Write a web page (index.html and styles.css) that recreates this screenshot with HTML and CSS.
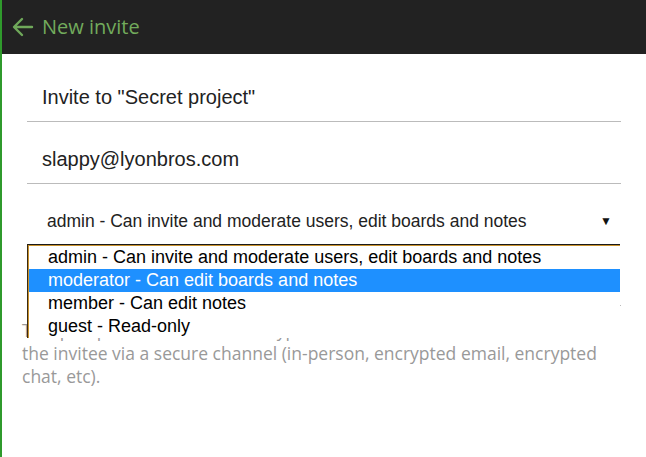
FILE: index.html
```html
<!DOCTYPE html>
<html>
<head>
<meta charset="utf-8">
<link rel="stylesheet" href="styles.css">
</head>
<body>
<div class="app">
  <header class="topbar">
    <svg class="back" width="22" height="20" viewBox="0 0 22 20"><path d="M20 10H3M10 2L2 10l8 8" fill="none" stroke="#6fa85a" stroke-width="2.4" stroke-linecap="round" stroke-linejoin="round"/></svg>
    <h1 class="title">New invite</h1>
  </header>
  <main class="content">
    <div class="field"><span class="field-text">Invite to "Secret project"</span></div>
    <div class="field"><span class="field-text">slappy@lyonbros.com</span></div>
    <div class="select-wrap">
      <div class="select">
        <span class="select-text">admin - Can invite and moderate users, edit boards and notes</span>
        <span class="caret">&#9660;</span>
      </div>
      <ul class="options">
        <li class="option">admin - Can invite and moderate users, edit boards and notes</li>
        <li class="option selected">moderator - Can edit boards and notes</li>
        <li class="option">member - Can edit notes</li>
        <li class="option">guest - Read-only</li>
      </ul>
    </div>
    <div class="field pass"><span class="field-text">&nbsp;</span></div>
    <p class="desc">This passphrase is used to encrypt the invite. You can communicate it to the invitee via a secure channel (in-person, encrypted email, encrypted chat, etc).</p>
  </main>
</div>
</body>
</html>
```

FILE: styles.css
```css
html, body {
  margin: 0;
  padding: 0;
  height: 100%;
  background: #fff;
}
.app {
  min-height: 100%;
  border-left: 2px solid #2f9a2c;
  box-sizing: border-box;
}
.topbar {
  height: 54px;
  background: #222222;
  display: flex;
  align-items: center;
  padding-left: 10px;
}
.back {
  display: block;
  margin-right: 8px;
}
.title {
  margin: 0;
  font-family: "Open Sans", sans-serif;
  font-weight: normal;
  font-size: 20px;
  color: #72ab5c;
  line-height: 26px;
}
.content {
  padding: 6px 25px 0 25px;
}
.field {
  border-bottom: 1px solid #bbbbbb;
  padding: 24px 0 11px 15px;
  height: 26px;
}
.field-text {
  font-family: "Liberation Sans", Arial, sans-serif;
  font-size: 20px;
  line-height: 26px;
  color: #222;
}
.select-wrap {
  position: relative;
}
.select {
  display: flex;
  align-items: center;
  justify-content: space-between;
  height: 60px;
  padding: 0 9px 0 20px;
  font-family: "Liberation Sans", Arial, sans-serif;
  font-size: 17.5px;
  color: #222;
}
.select-text {
  padding-top: 14px;
}
.caret {
  font-size: 12px;
  padding-top: 14px;
  color: #111;
}
.options {
  position: absolute;
  top: 60px;
  left: 0;
  right: 1px;
  margin: 0;
  padding: 1px 0 0 1px;
  list-style: none;
  background: #fff;
  border-top: 1px solid #1a1a1a;
  border-left: 1px solid #3a2a10;
  box-shadow: inset 1px 1px 0 #c8922e;
  z-index: 2;
  font-family: "Liberation Sans", Arial, sans-serif;
  font-size: 18px;
  color: #000;
}
.option {
  height: 23px;
  line-height: 22px;
  padding-left: 19px;
}
.option.selected {
  background: #1e90ff;
  color: #fff;
}
.pass {
  height: 26px;
}
.desc {
  margin: 0 0 0 -5px;
  padding: 13px 0 0 0;
  font-family: "Open Sans", sans-serif;
  font-size: 17.5px;
  line-height: 23px;
  color: #999;
}
```
